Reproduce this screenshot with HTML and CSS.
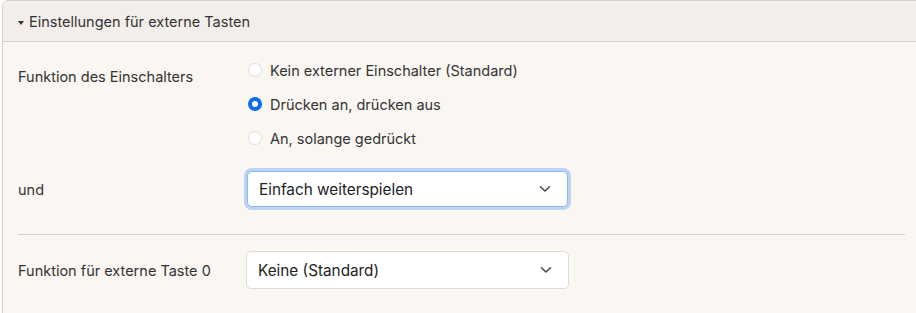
FILE: index.html
```html
<!DOCTYPE html>
<html lang="de">
<head>
<meta charset="utf-8">
<title>Einstellungen</title>
<link rel="stylesheet" href="styles.css">
</head>
<body>
<div class="panel">
  <div class="panel-header">
    <span class="caret"></span>
    <span>Einstellungen für externe Tasten</span>
  </div>
  <div class="panel-body">
    <div class="row row-radios">
      <div class="label label-top">Funktion des Einschalters</div>
      <div class="radios">
        <div class="radio"><span class="dot"></span><span>Kein externer Einschalter (Standard)</span></div>
        <div class="radio"><span class="dot checked"></span><span>Drücken an, drücken aus</span></div>
        <div class="radio"><span class="dot"></span><span>An, solange gedrückt</span></div>
      </div>
    </div>
    <div class="row row-select">
      <div class="label">und</div>
      <div class="select focused">
        <span>Einfach weiterspielen</span>
        <svg class="chev" width="12" height="8" viewBox="0 0 12 8"><path d="M1.5 1.8 L6 6 L10.5 1.8" fill="none" stroke="#444" stroke-width="1.5" stroke-linecap="round" stroke-linejoin="round"/></svg>
      </div>
    </div>
    <div class="divider"></div>
    <div class="row row-select2">
      <div class="label">Funktion für externe Taste 0</div>
      <div class="select">
        <span>Keine (Standard)</span>
        <svg class="chev" width="12" height="8" viewBox="0 0 12 8"><path d="M1.5 1.8 L6 6 L10.5 1.8" fill="none" stroke="#444" stroke-width="1.5" stroke-linecap="round" stroke-linejoin="round"/></svg>
      </div>
    </div>
  </div>
</div>
</body>
</html>
```
FILE: styles.css
```css
html, body {
  margin: 0;
  padding: 0;
  background: #ffffff;
}
body {
  font-family: Inter, "Noto Sans", "Liberation Sans", sans-serif;
  font-size: 14.5px;
  color: #333;
  overflow: hidden;
}
.panel {
  margin-left: 2px;
  width: 918px;
  border: 1px solid #d6d0ca;
  border-radius: 6px;
  overflow: hidden;
  background: #faf6f1;
  height: 330px;
}
.panel-header {
  height: 40px;
  display: flex;
  align-items: center;
  gap: 5px;
  padding-left: 15px;
  background: #f3eee9;
  border-bottom: 1px solid #d8d2cc;
  color: #333;
}
.caret {
  width: 0;
  height: 0;
  border-left: 3.5px solid transparent;
  border-right: 3.5px solid transparent;
  border-top: 4px solid #333;
  margin-top: 3px;
}
.panel-body {
  padding: 11px 16px 0 15px;
}
.row {
  display: grid;
  grid-template-columns: 228px 325px;
  align-items: center;
}
.row-radios {
  align-items: start;
}
.label-top {
  padding-top: 15px;
}
.radios {
  display: flex;
  flex-direction: column;
}
.radio {
  height: 34px;
  display: flex;
  align-items: center;
  gap: 8px;
  padding-left: 2px;
}
.dot {
  width: 14px;
  height: 14px;
  flex: none;
  box-sizing: border-box;
  border-radius: 50%;
  border: 1px solid #dedad5;
  background: #fff;
}
.dot.checked {
  border: 4px solid #0b6cf0;
  background: #fff;
}
.row-select {
  margin-top: 16px;
}
.select {
  height: 36px;
  box-sizing: border-box;
  background: #fff;
  border: 1px solid #dfdbd6;
  border-radius: 5px;
  display: flex;
  align-items: center;
  justify-content: space-between;
  padding: 0 16px 0 11px;
  font-size: 15.3px;
  color: #222;
}
.select.focused {
  border-color: #8fb5f0;
  box-shadow: 0 0 0 3px #bcd3f5;
  width: 321px;
  margin-left: 1px;
}
.row-select2 .select {
  height: 38px;
  width: 323px;
}
.divider {
  margin-top: 27px;
  border-top: 1px solid #d6d0ca;
  margin-bottom: 16px;
}
```
